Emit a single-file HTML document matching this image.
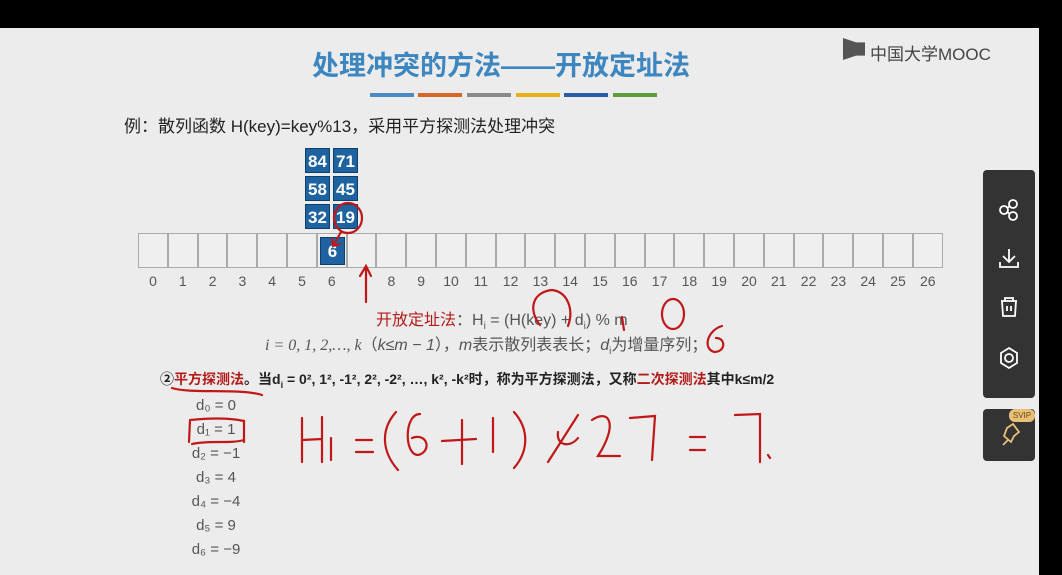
<!DOCTYPE html>
<html><head><meta charset="utf-8"><style>
*{margin:0;padding:0;box-sizing:border-box}
body{width:1062px;height:575px;background:#000;position:relative;overflow:hidden;font-family:"Liberation Sans","Noto Sans CJK SC",sans-serif}
#pg{position:absolute;left:0;top:28px;width:1039px;height:547px;background:#ececec}
.a{position:absolute;white-space:nowrap}
.cell{position:absolute;top:233px;height:35px;width:29.8px;border:1px solid #aaa;background:#efefef}
.bb{position:absolute;width:25px;height:25px;background:#1e63a0;color:#fff;font-size:17px;font-weight:bold;text-align:center;line-height:25px;border:1px solid #0c3f6e}
.n{position:absolute;top:273px;font-size:14px;color:#555;width:30px;text-align:center}
.d{position:absolute;left:176px;width:80px;text-align:center;font-size:15px;color:#555}
.red{color:#b31b1b}
</style></head><body>
<div id="pg"></div>
<div class="a" style="left:312px;top:44px;font-size:27px;font-weight:bold;color:#3d86c0">处理冲突的方法——开放定址法</div>
<div class="a" style="left:843px;top:38px;width:22px;height:22px;background:#555;clip-path:polygon(0 0,60% 20%,100% 20%,100% 80%,60% 80%,0 100%)"></div>
<div class="a" style="left:870px;top:40px;font-size:17px;color:#444">中国大学MOOC</div>
<div class="a" style="left:370px;top:93px;width:44px;height:4px;background:#4a8bc4"></div>
<div class="a" style="left:418px;top:93px;width:44px;height:4px;background:#d8682a"></div>
<div class="a" style="left:467px;top:93px;width:44px;height:4px;background:#8a8a8a"></div>
<div class="a" style="left:516px;top:93px;width:44px;height:4px;background:#e6b018"></div>
<div class="a" style="left:564px;top:93px;width:44px;height:4px;background:#2b5ba6"></div>
<div class="a" style="left:613px;top:93px;width:44px;height:4px;background:#5f9e3c"></div>
<div class="a" style="left:124px;top:112px;font-size:17px;color:#222">例：散列函数 H(key)=key%13，采用平方探测法处理冲突</div>
<div id="tbl"></div>
<div class="bb" style="left:305px;top:148px">84</div><div class="bb" style="left:333px;top:148px">71</div>
<div class="bb" style="left:305px;top:176px">58</div><div class="bb" style="left:333px;top:176px">45</div>
<div class="bb" style="left:305px;top:204px">32</div><div class="bb" style="left:333px;top:204px">19</div>
<div class="bb" style="left:320px;top:237px;height:28px;line-height:28px">6</div>
<div class="a" style="left:376px;top:306px;font-size:16px;color:#555"><span class="red">开放定址法</span>：H<sub style="font-size:10px">i</sub> = (H(key) + d<sub style="font-size:10px">i</sub>) % m</div>
<div class="a" style="left:265px;top:331px;font-size:16px;color:#555"><i style="font-family:'Liberation Serif',serif">i = 0, 1, 2,…, k</i>（<i>k</i>≤<i>m − 1</i>），<i>m</i>表示散列表表长；<i>d</i><sub style="font-size:10px">i</sub>为增量序列；</div>
<div class="a" style="left:160px;top:369px;font-size:14px;font-weight:bold;color:#222">②<span class="red">平方探测法</span>。当d<sub style="font-size:9px">i</sub> = 0², 1², -1², 2², -2², …, k², -k²时，称为平方探测法，又称<span class="red">二次探测法</span>其中k≤m/2</div>
<div class="d" style="top:397px">d₀ = 0</div>
<div class="d" style="top:421px">d₁ = 1</div>
<div class="d" style="top:445px">d₂ = −1</div>
<div class="d" style="top:469px">d₃ = 4</div>
<div class="d" style="top:493px">d₄ = −4</div>
<div class="d" style="top:517px">d₅ = 9</div>
<div class="d" style="top:541px">d₆ = −9</div>
<svg class="a" style="left:0;top:0" width="1062" height="575" fill="none" stroke="#c01818" stroke-width="2.2" stroke-linecap="round">
<ellipse cx="348" cy="218" rx="14" ry="15"/>
<path d="M341 232 L333 246 M333 246 L340 244 M333 246 L332 239"/>
<path d="M366 302 L366 266 M360 276 L366 266 L371 276"/>
<path d="M540 325 C528 310 532 292 552 290 C568 292 574 310 568 326"/>
<ellipse cx="673" cy="314" rx="11" ry="15"/>
<path d="M722 326 C708 330 702 348 714 352 C726 352 726 338 716 338"/>
<path d="M622 317 L624 330"/>
<path d="M172 388 C190 394 240 388 262 395"/>
<path d="M190 420 L189 442 M190 420 C210 418 230 418 244 421 L244 442 M192 444 C210 440 230 444 244 440"/>
<path d="M302 418 L302 462 M302 440 L322 439 M322 417 L322 462 M331 438 L331 460 M356 440 L372 440 M356 452 L373 452 M396 412 C380 430 382 452 398 470 M420 414 C404 414 404 455 418 455 C432 452 428 432 412 438 M442 441 L476 439 M462 420 L462 464 M493 418 L493 452 M514 412 C530 430 528 452 514 468 M548 462 L578 415 M558 432 C556 446 570 448 578 438 M592 420 C610 408 618 425 598 456 L620 456 M630 418 L655 416 L652 460 M690 437 L705 437 M690 450 L705 450 M735 415 L760 414 L760 462 M768 455 L770 458"/>
</svg>
<div class="a" style="left:983px;top:170px;width:52px;height:228px;background:#333;border-radius:4px"></div>
<div class="a" style="left:983px;top:409px;width:52px;height:52px;background:#333;border-radius:4px"></div>
<div class="a" style="left:1009px;top:409px;width:26px;height:13px;background:#e8c07a;border-radius:6px;font-size:8px;color:#6b4a10;text-align:center;line-height:13px">SVIP</div>
<svg class="a" style="left:983px;top:170px" width="52" height="291" fill="none" stroke="#fff" stroke-width="1.8">
<circle cx="21" cy="40" r="4"/><circle cx="30" cy="34" r="4"/><circle cx="30" cy="46" r="4"/><path d="M24 38L27 36M24 42L27 44"/>
<path d="M26 79V92M20 86L26 92L32 86M17 92V97H35V92"/>
<path d="M18 131H34M22 131V128H30V131M19 131L20 146H32L33 131M24 136V141M28 136V141"/>
<path d="M26 178L34 183V193L26 198L18 193V183Z"/><circle cx="26" cy="188" r="4"/>
<path stroke="#e8c07a" d="M20 275L25 270M24 258L30 254L36 262L31 266L28 272L21 266Z"/>
</svg>
<script>
var t=document.getElementById('tbl'),h='';
for(var i=0;i<27;i++){var x=138+i*29.8;h+='<div class="cell" style="left:'+x+'px"></div>';if(i!=7)h+='<div class="n" style="left:'+x+'px">'+i+'</div>';}
t.innerHTML=h;
</script>
</body></html>
